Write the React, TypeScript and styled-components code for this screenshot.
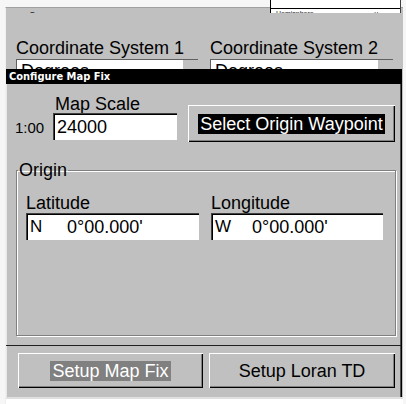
import React from "react";
import styled, { createGlobalStyle } from "styled-components";

const Global = createGlobalStyle`
  html, body { margin: 0; padding: 0; background: #ffffff; }
  body { font-family: "Liberation Sans", Arial, sans-serif; color: #000; }
`;

const Screen = styled.div`
  position: relative;
  width: 406px;
  height: 404px;
  overflow: hidden;
  background: #f6f6f6;
`;

/* ---------- background window (partly covered) ---------- */
const BackWindow = styled.div`
  position: absolute;
  left: 5px;
  top: 7px;
  right: 3px;
  bottom: 0;
  box-sizing: border-box;
  background: #c0c0c0;
  border-left: 1px solid #f0f0f0;
  border-top: 1px solid #a0a0a0;
  padding-left: 10px;
  display: flex;
  flex-direction: column;
`;

const ClipStrip = styled.div`
  height: 2px;
  overflow: hidden;
  padding-left: 13px;
  margin-top: 3px;
`;

const ClipText = styled.span<{ $size: number }>`
  display: block;
  font-size: ${(p) => p.$size}px;
  line-height: ${(p) => p.$size}px;
  color: #202020;
  white-space: pre;
`;

const BackGrid = styled.div`
  display: grid;
  grid-template-columns: 194px 183px;
  margin-top: 25px;
`;

const BackLabel = styled.div`
  font-size: 18px;
  line-height: 21px;
  white-space: nowrap;
`;

const Combo = styled.div<{ $w: number }>`
  width: ${(p) => p.$w}px;
  height: 22px;
  box-sizing: border-box;
  background: #fff;
  border-top: 1px solid #606060;
  border-left: 1px solid #606060;
  display: flex;
  overflow: hidden;
`;

const ComboText = styled.span`
  flex: 1;
  font-size: 18px;
  line-height: 18px;
  padding: 2px 0 0 4px;
`;

const ComboArrow = styled.span`
  width: 15px;
  background: #c0c0c0;
  border-left: 1px solid #fff;
`;

const StatusRow = styled.div`
  margin-top: auto;
  height: 7px;
  background: #fff;
  margin-left: -10px;
`;

const StatusClip = styled.div`
  height: 2px;
  overflow: hidden;
  padding-left: 14px;
  background: #e0e0e0;
`;

const TopFragment = styled.div`
  position: absolute;
  left: 270px;
  top: 0;
  width: 131px;
  height: 13px;
  box-sizing: border-box;
  background: #fff;
  border-left: 1px solid #000;
  border-right: 1px solid #404040;
  display: flex;
  flex-direction: column;
`;

const FragmentRule = styled.div`
  margin-top: 8px;
  height: 1px;
  background: #000;
`;

const FragmentClip = styled.div`
  height: 3px;
  overflow: hidden;
  padding: 1px 22px 0 5px;
  display: flex;
  justify-content: space-between;
`;

/* ---------- dialog ---------- */
const Dialog = styled.section`
  position: absolute;
  left: 6px;
  top: 69px;
  width: 396px;
  height: 328px;
  box-sizing: border-box;
  background: #c0c0c0;
  box-shadow: inset 1px 0 0 #e8e8e8, inset -1px 0 0 #000, inset -2px 0 0 #505050;
  display: flex;
  flex-direction: column;
`;

const TitleBar = styled.header`
  height: 15px;
  background: #000;
  color: #fff;
  font-family: "DejaVu Sans Condensed", "DejaVu Sans", sans-serif;
  font-stretch: condensed;
  font-weight: bold;
  font-size: 11px;
  line-height: 15px;
  padding-left: 3px;
  white-space: nowrap;
`;

const Body = styled.div`
  flex: 1;
  display: flex;
  flex-direction: column;
  padding: 11px 6px 9px 9px;
  min-height: 0;
`;

const TopRow = styled.div`
  display: flex;
  align-items: flex-start;
  gap: 11px;
`;

const ScaleBlock = styled.div`
  width: 162px;
  display: flex;
  flex-direction: column;
`;

const ScaleLabel = styled.div`
  margin-left: 40px;
  font-size: 18px;
  line-height: 18px;
  height: 18px;
  white-space: nowrap;
`;

const ScaleRow = styled.div`
  display: flex;
  align-items: center;
`;

const Prefix = styled.span`
  width: 38px;
  font-size: 15px;
  padding-top: 2px;
`;

const TextBox = styled.div<{ $w: number }>`
  width: ${(p) => p.$w}px;
  height: 27px;
  box-sizing: border-box;
  background: #fff;
  border-top: 1px solid #404040;
  border-left: 1px solid #404040;
  box-shadow: inset 1px 1px 0 #000;
  font-size: 18px;
  line-height: 20px;
  padding: 3px 0 0 3px;
  display: flex;
  white-space: pre;
`;

const Hemi = styled.span`
  width: 37px;
  font-size: 17px;
`;

const RaisedButton = styled.button<{ $w: number; $h: number }>`
  width: ${(p) => p.$w}px;
  height: ${(p) => p.$h}px;
  flex: none;
  box-sizing: border-box;
  margin: 0;
  padding: 0;
  border: none;
  background: #c0c0c0;
  box-shadow: inset 1px 1px 0 #fff, inset -1px -1px 0 #000, inset -2px -2px 0 #808080;
  font-family: "Liberation Sans", Arial, sans-serif;
  font-size: 18px;
  color: #000;
  display: flex;
  align-items: center;
  justify-content: center;
`;

const WaypointButton = styled(RaisedButton)`
  margin-top: 10px;
`;

const Highlight = styled.span<{ $bg: string }>`
  background: ${(p) => p.$bg};
  color: #fff;
  line-height: 20px;
  padding: 0 2px;
  white-space: nowrap;
`;

const Plain = styled.span`
  line-height: 20px;
  white-space: nowrap;
`;

const Group = styled.fieldset`
  flex: 1;
  margin: 19px 0 0 1px;
  padding: 14px 9px 0 9px;
  min-width: 0;
  border: 1px solid #808080;
  box-shadow: 1px 1px 0 #fff, inset 1px 1px 0 #fff;
`;

const GroupLegend = styled.legend`
  font-size: 18px;
  line-height: 18px;
  padding: 0 1px;
  margin-left: -8px;
`;

const FieldGrid = styled.div`
  display: grid;
  grid-template-columns: 173px 172px;
  column-gap: 12px;
`;

const Field = styled.div`
  display: flex;
  flex-direction: column;
`;

const FieldLabel = styled.div`
  font-size: 18px;
  line-height: 20px;
  height: 20px;
`;

const Separator = styled.div`
  height: 1px;
  background: #202020;
  margin-right: 1px;
`;

const ButtonBar = styled.div`
  height: 51px;
  box-sizing: border-box;
  padding: 7px 0 0 12px;
  display: flex;
  gap: 6px;
`;

export default function App() {
  return (
    <Screen>
      <Global />
      <BackWindow>
        <ClipStrip>
          <ClipText $size={9}>{"C"}</ClipText>
        </ClipStrip>
        <BackGrid>
          <BackLabel>Coordinate System 1</BackLabel>
          <BackLabel>Coordinate System 2</BackLabel>
          <Combo $w={182}>
            <ComboText>Degrees</ComboText>
            <ComboArrow />
          </Combo>
          <Combo $w={183}>
            <ComboText>Degrees</ComboText>
            <ComboArrow />
          </Combo>
        </BackGrid>
        <StatusRow>
          <StatusClip>
            <ClipText $size={14}>{"N   00 00.000'         N   00 00.000'                 W  00"}</ClipText>
          </StatusClip>
        </StatusRow>
      </BackWindow>
      <TopFragment>
        <FragmentRule />
        <FragmentClip>
          <ClipText $size={7}>{"Hemisphere"}</ClipText>
          <ClipText $size={7}>{"v"}</ClipText>
        </FragmentClip>
      </TopFragment>

      <Dialog>
        <TitleBar>Configure Map Fix</TitleBar>
        <Body>
          <TopRow>
            <ScaleBlock>
              <ScaleLabel>Map Scale</ScaleLabel>
              <ScaleRow>
                <Prefix>1:00</Prefix>
                <TextBox $w={124}>24000</TextBox>
              </ScaleRow>
            </ScaleBlock>
            <WaypointButton $w={207} $h={37}>
              <Highlight $bg="#000">Select Origin Waypoint</Highlight>
            </WaypointButton>
          </TopRow>
          <Group>
            <GroupLegend>Origin</GroupLegend>
            <FieldGrid>
              <Field>
                <FieldLabel>Latitude</FieldLabel>
                <TextBox $w={173}>
                  <Hemi>N</Hemi>
                  {"0°00.000'"}
                </TextBox>
              </Field>
              <Field>
                <FieldLabel>Longitude</FieldLabel>
                <TextBox $w={172}>
                  <Hemi>W</Hemi>
                  {"0°00.000'"}
                </TextBox>
              </Field>
            </FieldGrid>
          </Group>
        </Body>
        <Separator />
        <ButtonBar>
          <RaisedButton $w={185} $h={35}>
            <Highlight $bg="#808080">Setup Map Fix</Highlight>
          </RaisedButton>
          <RaisedButton $w={186} $h={35}>
            <Plain>Setup Loran TD</Plain>
          </RaisedButton>
        </ButtonBar>
      </Dialog>
    </Screen>
  );
}
